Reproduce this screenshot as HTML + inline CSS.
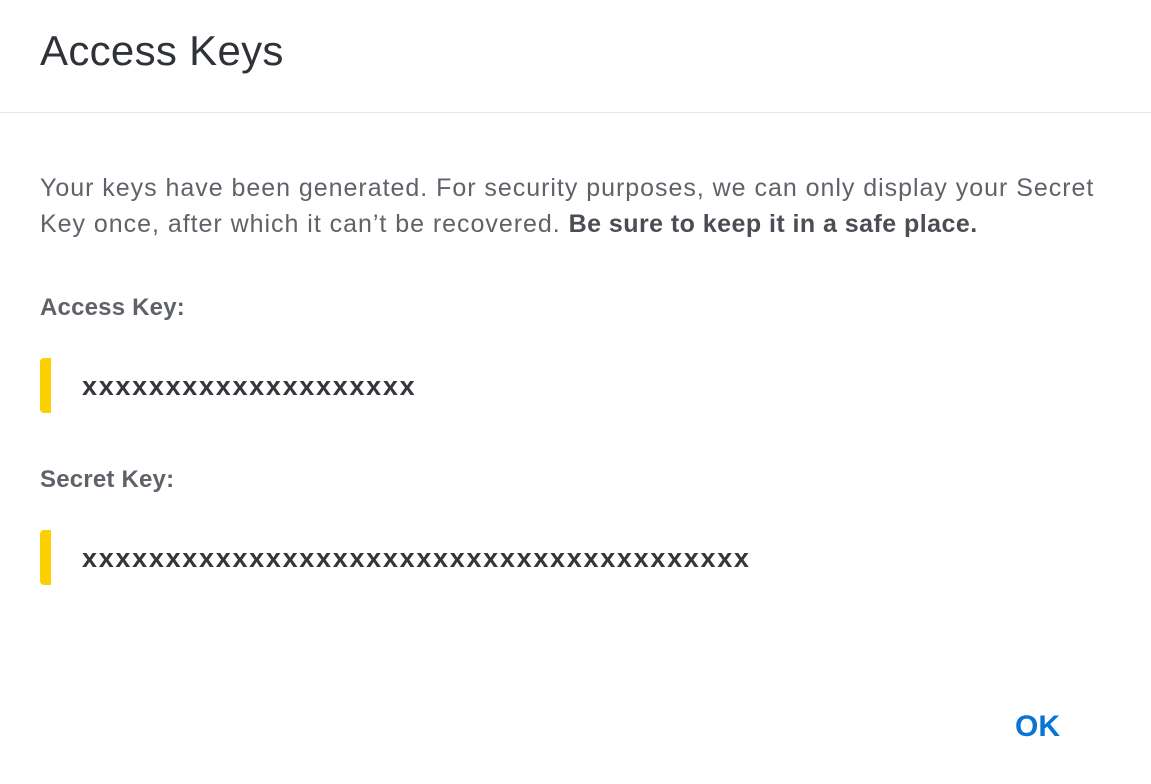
<!DOCTYPE html>
<html><head><style>
body{margin:0;width:1151px;height:784px;background:#fff;font-family:"Liberation Sans",sans-serif;position:relative;overflow:hidden}
.t{position:absolute;left:40px;top:27px;font-size:42px;letter-spacing:0.3px;color:#2f3338;white-space:nowrap}
.sep{position:absolute;left:0;right:0;top:112px;height:1px;background:#e8e8e8}
.p{position:absolute;left:40px;top:170px;font-size:25px;letter-spacing:0.97px;line-height:36px;color:#5f6369;white-space:nowrap}
.p b{color:#4a4e54;letter-spacing:0.45px}
.l{position:absolute;left:40px;font-size:24px;letter-spacing:0.2px;font-weight:bold;color:#5f6369}
.bar{position:absolute;left:40px;width:11px;height:55px;background:#fccf00;border-radius:4px 0 0 4px}
.k{position:absolute;left:82px;font-size:27px;font-weight:bold;color:#33373c;letter-spacing:1.7px;white-space:nowrap}
.ok{position:absolute;left:1015px;top:710px;font-size:30px;font-weight:bold;color:#0a74d1}
</style></head><body>
<div class="t">Access Keys</div>
<div class="sep"></div>
<div class="p">Your keys have been generated. For security purposes, we can only display your Secret<br>Key once, after which it can’t be recovered. <b>Be sure to keep it in a safe place.</b></div>
<div class="l" style="top:294px">Access Key:</div>
<div class="bar" style="top:358px"></div>
<div class="k" style="top:371px">xxxxxxxxxxxxxxxxxxxx</div>
<div class="l" style="top:466px">Secret Key:</div>
<div class="bar" style="top:530px"></div>
<div class="k" style="top:543px">xxxxxxxxxxxxxxxxxxxxxxxxxxxxxxxxxxxxxxxx</div>
<div class="ok">OK</div>
</body></html>
